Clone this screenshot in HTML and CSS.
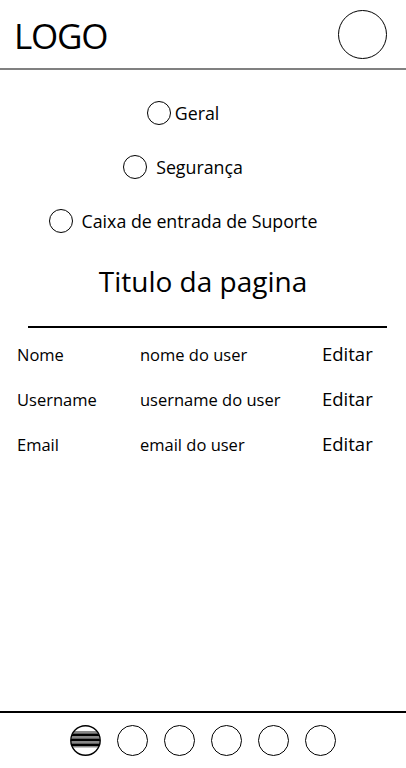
FILE: index.html
```
<!DOCTYPE html>
<html lang="pt">
<head>
  <meta charset="UTF-8" />
  <meta name="viewport" content="width=device-width, initial-scale=1.0" />
  <title>Definições</title>
  <link rel="stylesheet" href="styles.css">
</head>
<body>
  <header class="topbar">
    <div class="logo">LOGO</div>
    <div class="avatar"></div>
  </header>

  <main class="content">
    <ul class="menu">
      <li class="menu-item tight"><span class="radio"></span>Geral</li>
      <li class="menu-item"><span class="radio"></span>Segurança</li>
      <li class="menu-item"><span class="radio"></span>Caixa de entrada de Suporte</li>
    </ul>

    <h1 class="page-title">Titulo da pagina</h1>
    <hr class="divider" />

    <div class="rows">
      <div class="row">
        <span class="label">Nome</span>
        <span class="value">nome do user</span>
        <span class="edit">Editar</span>
      </div>
      <div class="row">
        <span class="label">Username</span>
        <span class="value">username do user</span>
        <span class="edit">Editar</span>
      </div>
      <div class="row">
        <span class="label">Email</span>
        <span class="value">email do user</span>
        <span class="edit">Editar</span>
      </div>
    </div>
  </main>

  <nav class="bottombar">
    <svg class="nav-btn" width="31" height="31" viewBox="0 0 31 31">
      <defs>
        <clipPath id="c"><circle cx="15.5" cy="15.5" r="14.5" /></clipPath>
      </defs>
      <g clip-path="url(#c)">
        <rect x="0" y="6" width="31" height="2.5" fill="#888" />
        <rect x="0" y="8.5" width="31" height="2.5" fill="#000" />
        <rect x="0" y="11" width="31" height="2.5" fill="#888" />
        <rect x="0" y="13.5" width="31" height="2.5" fill="#000" />
        <rect x="0" y="16" width="31" height="2.5" fill="#888" />
        <rect x="0" y="18.5" width="31" height="2.5" fill="#000" />
        <rect x="0" y="21" width="31" height="1.5" fill="#888" />
      </g>
      <circle cx="15.5" cy="15.5" r="14.7" fill="none" stroke="#000" stroke-width="1.4" />
    </svg>
    <span class="nav-dot"></span>
    <span class="nav-dot"></span>
    <span class="nav-dot"></span>
    <span class="nav-dot"></span>
    <span class="nav-dot"></span>
  </nav>
</body>
</html>
```

FILE: styles.css
```
html, body { margin: 0; padding: 0; }
body { font-family: "Open Sans", "Noto Sans", sans-serif; color: #000; background: #fff; height: 768px; display: flex; flex-direction: column; }

.topbar { height: 68px; display: flex; align-items: center; justify-content: space-between; padding: 0 19px 0 14px; border-bottom: 2px solid #808080; }
.logo { font-size: 35px; letter-spacing: -1.2px; margin-top: 2px; }
.avatar { width: 47px; height: 47px; border: 1.3px solid #000; border-radius: 50%; margin-top: 1px; }

.content { flex: 1; }

.menu { list-style: none; margin: 31px 0 0; padding: 0 40px 0 0; display: flex; flex-direction: column; align-items: center; gap: 30px; }
.menu-item { display: flex; align-items: center; gap: 9px; font-size: 17.8px; line-height: 24px; }
.menu-item.tight { gap: 4px; }
.radio { width: 22px; height: 22px; border: 1.3px solid #000; border-radius: 50%; }

.page-title { font-weight: normal; font-size: 28px; text-align: center; margin: 31px 0 0; line-height: 34px; }

.divider { margin: 28px 19px 0 28px; border: 0; border-top: 2px solid #000; }

.rows { margin-top: 4px; }
.row { display: flex; align-items: center; height: 45px; padding-left: 17px; font-size: 16.5px; }
.label { width: 123px; }
.value { width: 182px; }
.edit { font-size: 18.5px; margin-top: -3px; }

.bottombar { height: 57px; border-top: 2px solid #000; display: flex; justify-content: center; align-items: flex-start; gap: 16px; padding-top: 12px; box-sizing: border-box; }
.nav-btn { display: block; }
.nav-dot { width: 29px; height: 29px; border: 1.2px solid #000; border-radius: 50%; }
```
